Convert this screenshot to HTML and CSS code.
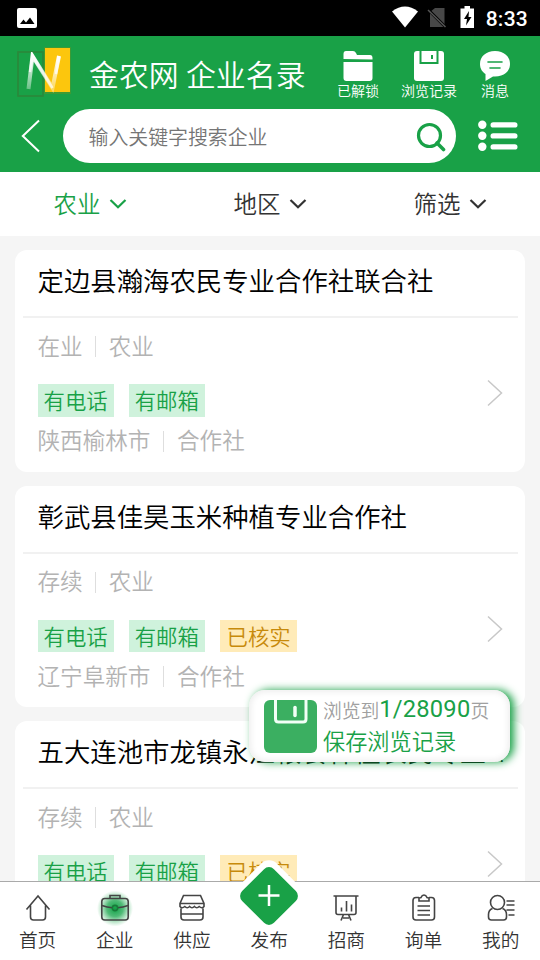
FILE: index.html
```html
<!DOCTYPE html>
<html lang="zh-CN">
<head>
<meta charset="utf-8">
<title>金农网 企业名录</title>
<link rel="stylesheet" href="styles.css">
</head>
<body>
<div class="app">
  <div class="status">
    <svg class="status-pic" width="20" height="20" viewBox="0 0 20 20"><rect width="20" height="20" rx="2" fill="#fff"/><path d="M3 16l3.500-4.500 2.500 3 4-5L17.500 16z" fill="#000"/></svg>
    <svg width="83" height="24" viewBox="0 0 83 24" class="status-icons">
      <path d="M0 5.500Q13-4.500 26 5.500L13 21.500z" fill="#fff"/>
      <path d="M38 6l5-4h9.500v19H38z" fill="#484848"/><path d="M35.500 3l18 18" stroke="#000" stroke-width="3"/><path d="M36 4l17.500 17" stroke="#555" stroke-width="1.500"/>
      <path d="M68.500 2.500h4V0h5.500v2.500h4V22H68.500z" fill="#fff"/><path d="M77 5l-5 8h3l-1 6.500 5.500-8.500h-3z" fill="#000"/>
    </svg>
    <span class="clock">8:33</span>
  </div>

  <header class="header">
    <div class="brand-row">
      <svg class="logo" width="58" height="54" viewBox="0 0 58 54">
        <defs>
          <filter id="soft"><feGaussianBlur stdDeviation=".7"/></filter>
          <linearGradient id="fade" x1="0" y1="0" x2="0" y2="1"><stop offset="0" stop-color="#fff"/><stop offset="1" stop-color="#fff" stop-opacity=".35"/></linearGradient>
        </defs>
        <rect x="4" y="8" width="25" height="44" fill="none" stroke="#2b8a3c" stroke-width="1.800" filter="url(#soft)"/>
        <rect x="30" y="3" width="27" height="47" fill="#3c9a35" filter="url(#soft)"/>
        <rect x="31" y="4" width="25" height="44" fill="#fcc60d"/>
        <path d="M14.500 45L18.500 12L38.500 44L45 12" fill="none" stroke="url(#fade)" stroke-width="4" filter="url(#soft)"/>
        <path d="M18.500 12L38.500 44M42 30L45 12M18.500 12l-2.500 16" fill="none" stroke="#fff" stroke-width="2.500" stroke-opacity=".7" filter="url(#soft)"/>
      </svg>
      <h1 class="title">金农网 企业名录</h1>
      <div class="tool tool-a">
        <svg width="32" height="30" viewBox="0 0 32 30"><path d="M1.500 8V3Q1.500 0 4 0h7q2 0 3 2l1 2h13q2.500 0 2.500 3v1.500zM1.500 11h29v16q0 3-3 3h-23q-3 0-3-3z" fill="#fff"/></svg>
        <span>已解锁</span>
      </div>
      <div class="tool tool-b">
        <svg width="32" height="30" viewBox="0 0 32 30"><path d="M4 0h24q3 0 3 3v24q0 3-3 3H4q-3 0-3-3V3q0-3 3-3z" fill="#fff"/><path d="M7.500 0v12h17V0" fill="none" stroke="#19a147" stroke-width="2"/><path d="M19 4v4" stroke="#19a147" stroke-width="2"/></svg>
        <span>浏览记录</span>
      </div>
      <div class="tool tool-c">
        <svg width="32" height="30" viewBox="0 0 32 30"><path d="M16 0C7 0 1 5.500 1 13c0 5 2.500 8 5.500 10v7l7.500-4.500h2c9 0 15-5 15-12.500S25 0 16 0z" fill="#fff"/><path d="M9 11h14M11 17h10" stroke="#19a147" stroke-width="1.600" stroke-linecap="round"/></svg>
        <span>消息</span>
      </div>
    </div>
    <div class="search-row">
      <svg class="back" width="20" height="34" viewBox="0 0 20 34"><path d="M18 1.500L1.800 17 18 32.500" fill="none" stroke="#fff" stroke-width="2"/></svg>
      <div class="search">
        <span>输入关键字搜索企业</span>
        <svg width="30" height="30" viewBox="0 0 30 30"><circle cx="13.500" cy="13.500" r="11" fill="none" stroke="#19a147" stroke-width="3.200"/><path d="M21 21l6.500 6.500" stroke="#19a147" stroke-width="3.600" stroke-linecap="round"/></svg>
      </div>
      <svg class="menu" width="40" height="32" viewBox="0 0 40 32" fill="#fff"><circle cx="4.300" cy="4.800" r="4.200"/><circle cx="4.300" cy="15.800" r="4.200"/><circle cx="4.300" cy="26.800" r="4.200"/><rect x="12.500" y="2.200" width="27" height="5.400" rx="2.700"/><rect x="12.500" y="13.200" width="27" height="5.400" rx="2.700"/><rect x="12.500" y="24.200" width="27" height="5.400" rx="2.700"/></svg>
    </div>
  </header>

  <div class="filters">
    <div class="filter active">农业<svg width="18" height="12" viewBox="0 0 18 12"><path d="M1.500 2l7.500 7.200L16.500 2"/></svg></div>
    <div class="filter">地区<svg width="18" height="12" viewBox="0 0 18 12"><path d="M1.500 2l7.500 7.200L16.500 2"/></svg></div>
    <div class="filter">筛选<svg width="18" height="12" viewBox="0 0 18 12"><path d="M1.500 2l7.500 7.200L16.500 2"/></svg></div>
  </div>

  <main class="list">
    <article class="card">
      <h2>定边县瀚海农民专业合作社联合社</h2>
      <div class="card-body">
        <div class="info">
          <div class="meta"><span>在业</span><i></i><span>农业</span></div>
          <div class="tags"><span class="tag">有电话</span><span class="tag">有邮箱</span></div>
          <div class="meta place"><span>陕西榆林市</span><i></i><span>合作社</span></div>
        </div>
        <svg class="arrow" width="16" height="28" viewBox="0 0 16 28"><path d="M1 1.500L14.500 14 1 26.500"/></svg>
      </div>
    </article>
    <article class="card">
      <h2>彰武县佳昊玉米种植专业合作社</h2>
      <div class="card-body">
        <div class="info">
          <div class="meta"><span>存续</span><i></i><span>农业</span></div>
          <div class="tags"><span class="tag">有电话</span><span class="tag">有邮箱</span><span class="tag gold">已核实</span></div>
          <div class="meta place"><span>辽宁阜新市</span><i></i><span>合作社</span></div>
        </div>
        <svg class="arrow" width="16" height="28" viewBox="0 0 16 28"><path d="M1 1.500L14.500 14 1 26.500"/></svg>
      </div>
    </article>
    <article class="card">
      <h2>五大连池市龙镇永江粮食种植农民专业...</h2>
      <div class="card-body">
        <div class="info">
          <div class="meta"><span>存续</span><i></i><span>农业</span></div>
          <div class="tags"><span class="tag">有电话</span><span class="tag">有邮箱</span><span class="tag gold">已核实</span></div>
        </div>
        <svg class="arrow" width="16" height="28" viewBox="0 0 16 28"><path d="M1 1.500L14.500 14 1 26.500"/></svg>
      </div>
    </article>
  </main>

  <aside class="float">
    <svg width="53" height="53" viewBox="0 0 53 53"><rect width="53" height="53" rx="6" fill="#3baf61"/><path d="M11.500 0v19q0 3 3 3H39q3 0 3-3V0" fill="none" stroke="#f2fff6" stroke-width="3"/><path d="M31 7.500v8" stroke="#f2fff6" stroke-width="3.500" stroke-linecap="round"/></svg>
    <div class="float-text">
      <div class="progress">浏览到<b>1/28090</b>页</div>
      <div class="save">保存浏览记录</div>
    </div>
  </aside>

  <nav class="nav">
    <div class="nav-item"><svg width="30" height="30" viewBox="0 0 30 30"><path d="M3.500 16.500L15 3l11.500 13.500M7.500 12.500V24q0 3 3 3h9q3 0 3-3V12.500"/></svg><span>首页</span></div>
    <div class="nav-item">
      <svg width="30" height="30" viewBox="0 0 30 30"><defs><radialGradient id="glow"><stop offset="0" stop-color="#0ea244"/><stop offset=".45" stop-color="#32af60" stop-opacity=".85"/><stop offset="1" stop-color="#65c886" stop-opacity="0"/></radialGradient></defs><circle cx="15" cy="15.500" r="18" fill="url(#glow)" stroke="none"/><rect x="1.800" y="5.500" width="26.400" height="21.500" rx="3"/><path d="M10 5.500V2.500h10v3M2 12.500q5 2 10.500 2.200M28 12.500q-5 2-10.500 2.200"/><circle cx="15" cy="15" r="2.600" stroke="#187a3a"/></svg><span>企业</span></div>
    <div class="nav-item"><svg width="30" height="30" viewBox="0 0 30 30"><path d="M6.500 2.500h17l3.500 8v3q-2 2.500-4.800 0-2.400 2.500-4.800 0-2.400 2.500-4.800 0-2.400 2.500-4.800 0Q5 16 3 13.500v-3zM3 10.500h24M4 15.500V24q0 3 3 3h16q3 0 3-3v-8.500M4 21h22"/></svg><span>供应</span></div>
    <div class="nav-item publish">
      <svg width="76" height="76" viewBox="0 0 76 76"><rect x="9.500" y="9.500" width="57" height="57" rx="11" transform="rotate(45 38 38)" fill="#fff" stroke="none"/><rect x="15.500" y="15.500" width="45" height="45" rx="7" transform="rotate(45 38 38)" fill="#19a147" stroke="none"/><path d="M27.500 37.500h21M38 27v21" stroke="#fff" stroke-width="2.500"/></svg><span>发布</span></div>
    <div class="nav-item"><svg width="30" height="30" viewBox="0 0 30 30"><path d="M2.500 3h25M5 3v16.500q0 2 2 2h16q2 0 2-2V3M10.500 14.500v4M15.500 8v10.500M20.500 11.500v7M12.500 21.500L10 27.500M17.500 21.500l2.500 6M12 25h6"/></svg><span>招商</span></div>
    <div class="nav-item"><svg width="30" height="30" viewBox="0 0 30 30"><path d="M10 4.500H7q-3 0-3 3V24q0 3 3 3h15.500q3 0 3-3V7.500q0-3-3-3H20M10 8V5l2-.5q1-2.500 3-2.500t3 2.500l2 .5v3zM8.500 13H21M8.500 17.500H21M8.500 22H21"/></svg><span>询单</span></div>
    <div class="nav-item"><svg width="30" height="30" viewBox="0 0 30 30"><circle cx="11.500" cy="9.500" r="7"/><path d="M6.500 15.500Q2.500 17 2.500 21.500V24q0 3 3 3h12q3 0 3-3v-2.500q0-4.500-4-6M20.500 8h8M20.500 12h8M20.500 17h8M22.500 22h6"/></svg><span>我的</span></div>
  </nav>
</div>
</body>
</html>
```
FILE: styles.css
```css
* { box-sizing: border-box; }
body {
  margin: 0;
  background: #f5f5f5;
  font-family: Roboto, "Noto Sans CJK SC DemiLight", "Noto Sans CJK SC", sans-serif;
  font-weight: 350;
  color: #333;
}
svg { display: block; flex: none; }
.app {
  position: relative;
  width: 540px;
  height: 960px;
  overflow: hidden;
  display: flex;
  flex-direction: column;
}
.status {
  height: 36px;
  flex: none;
  background: #000;
  display: flex;
  align-items: center;
  padding: 0 12px 0 17px;
}
.status-icons { margin-left: auto; margin-right: 11px; }
.clock { color: #fff; font: 500 21px/36px Roboto, sans-serif; letter-spacing: .25px; padding-top: 2px; }

.header { height: 136px; flex: none; background: #19a147; color: #fff; }
.brand-row { height: 73px; display: flex; align-items: flex-start; }
.logo { margin: 8px 0 0 14px; }
.title { width: 248px; margin: 20px 0 0 17px; flex: none; font-size: 29.900px; line-height: 40px; font-weight: 350; white-space: nowrap; }
.tool { width: 70px; flex: none; padding-top: 15px; display: flex; flex-direction: column; align-items: center; font-size: 14px; line-height: 20px; font-weight: 400; white-space: nowrap; }
.tool-a { margin-left: -14px; }
.tool-b { margin-left: 1px; }
.tool-c { margin-left: -4px; }
.search-row { display: flex; align-items: center; height: 54px; }
.back { margin-left: 21px; }
.search {
  width: 393px;
  height: 54px;
  margin-left: 22px;
  padding: 0 10px 0 25.500px;
  border-radius: 27px;
  background: #fff;
  color: #757575;
  font-size: 19.900px;
  display: flex;
  align-items: center;
  justify-content: space-between;
}
.search svg { margin-top: 2px; }
.menu { margin-left: 22px; }

.filters { height: 64px; flex: none; display: flex; background: #fff; font-size: 23.500px; }
.filter { flex: 1; display: flex; align-items: center; justify-content: center; gap: 8px; padding-bottom: 3px; }
.filter svg { margin-top: 3px; fill: none; stroke: currentColor; stroke-width: 2.200; }
.active { color: #19a147; }

.list { flex: 1; min-height: 0; overflow: hidden; padding: 14px 15px 0; }
.card { height: 221.500px; margin-bottom: 14.200px; padding: 0 7.500px; background: #fff; border-radius: 12px; }
.card h2 { margin: 0; height: 68px; padding: 0 15px; border-bottom: 2px solid #f1f1f1; font-size: 26.400px; line-height: 65px; font-weight: 350; color: #000; white-space: nowrap; }
.card-body { display: flex; justify-content: space-between; padding: 0 15px; }
.meta { display: flex; align-items: center; height: 32px; margin-top: 11px; color: #b3b3b3; font-size: 22.600px; }
.meta i { width: 1px; height: 21px; margin: 3px 13px 0 12px; background: #dedede; }
.tags { display: flex; gap: 15px; margin-top: 23px; }
.tag { height: 32.500px; padding: 0 6px; background: #cff2dc; color: #19a147; font-size: 21.400px; line-height: 35px; white-space: nowrap; }
.gold { background: #ffebb8; color: #c78a0b; padding: 0 6.700px; }
.place { margin-top: 7px; }
.place i { margin: 3px 13px 0 12.500px; }
.arrow { margin-top: 61px; fill: none; stroke: #c8c8c8; stroke-width: 1.500; }

.float {
  position: absolute;
  left: 249px;
  top: 690px;
  width: 261px;
  height: 72px;
  padding: 10px 0 0 15px;
  border-radius: 16px;
  display: flex;
  gap: 6px;
  background: #fff;
  box-shadow: inset 0 0 6px 2px #eee, 4px 0 9px #19a147;
}
.float-text { margin-top: -7px; white-space: nowrap; }
.progress { height: 32px; display: flex; align-items: center; color: #a0a0a0; font-size: 18.800px; }
.progress b { font-family: Roboto, sans-serif; font-size: 23.700px; font-weight: 400; color: #19a147; letter-spacing: .2px; }
.save { font-size: 22.200px; line-height: 35px; color: #19a147; }

.nav { height: 79px; flex: none; position: relative; margin: 0 0 0 -1px; display: flex; background: #fff; border-top: 1.500px solid #aaa; }
.nav-item { width: 77.200px; display: flex; flex-direction: column; align-items: center; padding-top: 11px; font-size: 18.700px; line-height: 26px; }
.nav-item > span { margin-top: 5px; }
.nav-item svg { fill: none; stroke: #444; stroke-width: 1.600; overflow: visible; }
.publish svg { margin: -35px 0 -11px; }
```
